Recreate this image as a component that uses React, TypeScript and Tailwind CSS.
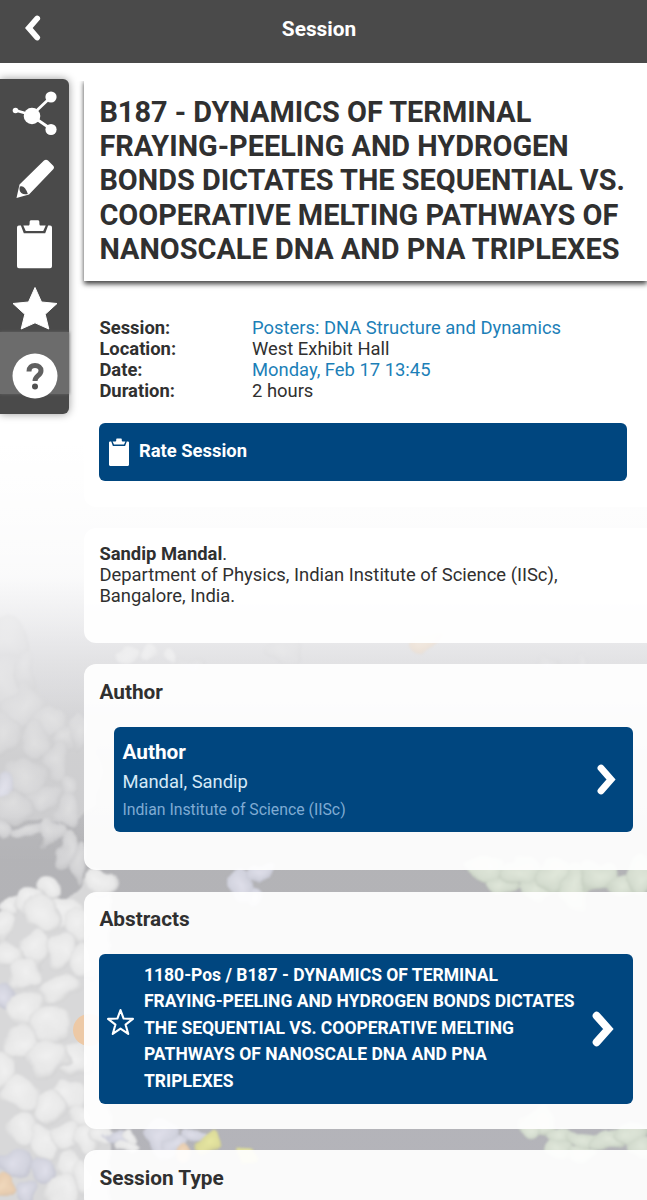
import type { ReactNode } from "react";

// x, y, radius x, radius y, gradient
type Blob = [number, number, number, number, string];

const BLOBS: Blob[] = [
  // left cluster, upper part
  [8, 640, 18, 24, "gray"],
  [2, 680, 26, 26, "gray"],
  [26, 668, 13, 20, "gray"],
  [22, 706, 22, 22, "gray"],
  [4, 735, 18, 24, "gray"],
  [52, 720, 20, 11, "gray"],
  [36, 742, 15, 20, "gray"],
  [66, 736, 13, 14, "gray"],
  [58, 762, 14, 20, "gray"],
  [80, 732, 9, 16, "gray"],
  [26, 778, 22, 17, "gray"],
  [2, 788, 10, 15, "lilac"],
  [70, 786, 12, 15, "gray"],
  [44, 796, 17, 13, "gray"],
  [12, 806, 20, 15, "gray"],
  [68, 812, 10, 18, "gray"],
  [30, 830, 20, 6, "gray"],
  [2, 828, 10, 10, "gray"],
  [52, 832, 9, 15, "gray"],
  [64, 852, 8, 18, "gray"],
  [78, 862, 9, 20, "gray"],
  [103, 882, 17, 14, "white"],
  // left cluster, lower part
  [48, 888, 13, 11, "white"],
  [11, 906, 9, 12, "white"],
  [28, 902, 12, 14, "white"],
  [64, 912, 20, 16, "white"],
  [42, 914, 18, 17, "white"],
  [2, 928, 13, 16, "white"],
  [78, 926, 15, 18, "white"],
  [36, 948, 15, 20, "white"],
  [8, 956, 18, 15, "white"],
  [60, 952, 13, 20, "white"],
  [26, 974, 15, 14, "white"],
  [80, 962, 14, 20, "white"],
  [5, 996, 17, 17, "lilac"],
  [58, 990, 24, 13, "white"],
  [26, 1010, 18, 18, "white"],
  [50, 1022, 20, 18, "white"],
  [22, 1042, 18, 17, "white"],
  [72, 1058, 20, 17, "white"],
  [46, 1056, 20, 20, "white"],
  [2, 1070, 15, 22, "white"],
  [70, 1096, 20, 16, "white"],
  [22, 1094, 19, 18, "white"],
  [50, 1106, 15, 18, "white"],
  [80, 1118, 16, 13, "white"],
  [24, 1130, 19, 19, "white"],
  [46, 1142, 14, 17, "white"],
  [66, 1138, 15, 14, "white"],
  [88, 1140, 15, 12, "white"],
  [104, 1134, 12, 9, "white"],
  [70, 1168, 13, 17, "white"],
  [16, 1163, 19, 13, "lilac"],
  [44, 1172, 12, 15, "lilac"],
  [62, 1192, 14, 17, "white"],
  [2, 1184, 11, 12, "amber"],
  [25, 1192, 13, 13, "lilac"],
  [82, 1178, 9, 18, "white"],
  // strips between the cards
  [127, 654, 11, 10, "white"],
  [149, 655, 10, 9, "white"],
  [171, 656, 9, 8, "white"],
  [190, 664, 13, 8, "gray"],
  [283, 652, 15, 14, "gray"],
  [424, 643, 15, 8, "amber"],
  [547, 663, 14, 8, "gray"],
  [579, 662, 5, 8, "gray"],
  [240, 885, 13, 15, "lilac"],
  [262, 874, 15, 9, "lilac"],
  [254, 896, 10, 8, "lilac"],
  [488, 868, 20, 13, "green"],
  [503, 886, 16, 12, "green"],
  [523, 870, 19, 14, "green"],
  [535, 890, 17, 12, "green"],
  [552, 876, 16, 17, "green"],
  [575, 888, 17, 20, "green"],
  [598, 875, 18, 17, "green"],
  [622, 887, 17, 14, "green"],
  [641, 876, 14, 20, "green"],
  [120, 1136, 12, 9, "lilac"],
  [131, 1134, 8, 9, "white"],
  [126, 1147, 12, 7, "white"],
  [160, 1138, 13, 20, "lilac"],
  [176, 1146, 13, 8, "lilac"],
  [190, 1134, 15, 9, "lilac"],
  [186, 1154, 10, 7, "amber"],
  [208, 1143, 9, 15, "yellow"],
  [245, 1155, 11, 8, "yellow"],
  [540, 1122, 18, 14, "green"],
  [529, 1130, 7, 10, "green"],
  [562, 1134, 16, 9, "green"],
  [560, 1149, 13, 11, "green"],
  [584, 1138, 16, 9, "green"],
  [583, 1154, 15, 9, "green"],
  [608, 1140, 17, 13, "green"],
  [629, 1135, 16, 11, "green"],
  [640, 1151, 17, 11, "green"],
];

const GRADIENTS: Record<string, [string, string, string]> = {
  gray: ["#dcdcdd", "#d2d2d4", "#c5c5c7"],
  white: ["#f0f0f0", "#e8e8e8", "#d0d0d1"],
  lilac: ["#dfdfea", "#d2d3de", "#c3c4d0"],
  green: ["#e0e7da", "#d4dccf", "#c2cbbd"],
  amber: ["#f0d8bc", "#e8cdb0", "#d9c4ae"],
  yellow: ["#e8e8a2", "#dddc9a", "#c9c894"],
};

// Faded protein surface behind the cards
function Backdrop() {
  return (
    <svg
      aria-hidden
      className="pointer-events-none absolute inset-0"
      width="647"
      height="1200"
      viewBox="0 0 647 1200"
    >
      <defs>
        {Object.entries(GRADIENTS).map(([id, [hi, mid, lo]]) => (
          <radialGradient key={id} id={id} cx="48%" cy="45%" r="56%">
            <stop offset="0" stopColor={hi} />
            <stop offset="0.7" stopColor={mid} />
            <stop offset="1" stopColor={lo} />
          </radialGradient>
        ))}
        <linearGradient id="sky" x1="0" y1="0" x2="0" y2="1">
          <stop offset="0.37" stopColor="#ffffff" />
          <stop offset="0.46" stopColor="#eeeef0" />
          <stop offset="0.56" stopColor="#cfcfd2" />
          <stop offset="0.7" stopColor="#b3b3b6" />
          <stop offset="1" stopColor="#b4b4ba" />
        </linearGradient>
        <linearGradient id="haze" x1="0" y1="0" x2="0" y2="1">
          <stop offset="0.48" stopColor="#fff" stopOpacity="0.8" />
          <stop offset="0.55" stopColor="#eeeef0" stopOpacity="0.6" />
          <stop offset="0.63" stopColor="#eee" stopOpacity="0.15" />
          <stop offset="0.72" stopColor="#fff" stopOpacity="0" />
        </linearGradient>
        <filter
          id="surface"
          filterUnits="userSpaceOnUse"
          x="-20"
          y="560"
          width="690"
          height="660"
          colorInterpolationFilters="sRGB"
        >
          <feTurbulence type="fractalNoise" baseFrequency="0.035" numOctaves="2" seed="4" />
          <feDisplacementMap in="SourceGraphic" scale="24" xChannelSelector="R" yChannelSelector="G" />
          <feGaussianBlur stdDeviation="1.300" />
        </filter>
      </defs>
      <rect width="647" height="1200" fill="url(#sky)" />
      <g filter="url(#surface)">
        <path
          d="M-20 620H14L34 670 42 706 70 714 84 730H100V790L76 820 56 820 24 820-20 825Z"
          fill="#cacacc"
        />
        <path d="M-20 920 20 905 40 890 62 898 84 880H110V1215H-20Z" fill="#d8d8d9" />
        {BLOBS.map(([x, y, rx, ry, fill], i) => (
          <ellipse key={i} cx={x} cy={y} rx={rx} ry={ry} fill={`url(#${fill})`} />
        ))}
      </g>
      <circle cx="89" cy="1030" r="16" fill="#edc9a6" />
      <rect width="647" height="1200" fill="url(#haze)" />
    </svg>
  );
}

function ClipboardIcon({ className }: { className: string }) {
  return (
    <svg viewBox="0 0 36 50" fill="currentColor" className={className}>
      <path d="M2 6h2l3 8h22l3-8h2a2 2 0 0 1 2 2v40a2 2 0 0 1-2 2H2a2 2 0 0 1-2-2V8a2 2 0 0 1 2-2Z" />
      <path d="M6.500 6h5c1.500 0 1.500-1 1.500-3.500C13 1 13.600.5 15 .5h6c1.400 0 2 .5 2 2C23 5 23 6 24.500 6h5L27 11.500H9Z" />
    </svg>
  );
}

function Chevron({ className }: { className: string }) {
  return (
    <svg viewBox="0 0 20 34" fill="none" stroke="currentColor" className={className}>
      <path d="m4.500 4.500 11 12.500-11 12.500" strokeWidth="7.500" strokeLinecap="round" />
    </svg>
  );
}

function Toolbar() {
  return (
    <nav className="mt-4 h-[335px] w-[69px] shrink-0 rounded-r-md bg-[#4a4a4a] text-white shadow-[0_0_9px_rgba(0,0,0,0.4)]">
      <div className="flex h-[253px] flex-col items-center">
        <svg viewBox="0 0 46 46" className="mt-3 h-[46px] w-[46px] shrink-0" fill="currentColor">
          <path d="M4 19.500 20 24 39 6M20 25l19 13" stroke="currentColor" strokeWidth="2.800" fill="none" />
          <circle cx="3.500" cy="19.500" r="2.800" />
          <circle cx="20" cy="25" r="8.300" />
          <circle cx="39" cy="6" r="5.600" />
          <circle cx="39" cy="38.500" r="5.600" />
        </svg>
        <svg viewBox="0 0 40 40" className="mt-[22px] h-10 w-10 shrink-0" fill="currentColor">
          <path d="M1.500 39 4.500 25.500 29 1.500q2-1.500 4 0l5 5q2 2 0 4L14 35.500Z" />
          <path d="M4.800 27.500q5-2 8 7.500-4 1-6.500-1-2.500-2.500-1.500-6.500Z" fill="#4a4a4a" />
        </svg>
        <ClipboardIcon className="mt-[20px] h-[50px] w-[35px] shrink-0" />
        <svg viewBox="0 0 46 44" className="mt-[17px] h-[44px] w-[46px] shrink-0" fill="currentColor">
          <path
            d="m23 1.500 6.500 14.500 15.500 1.500L33.200 28.300l3.600 14.700L23 36.800 9.200 43l3.600-14.700L1 17.500 16.500 16Z"
            stroke="currentColor"
            strokeLinejoin="round"
          />
        </svg>
      </div>
      <div className="flex h-[62px] justify-center bg-[#6c6c6c] pt-[21px] shadow-[0_0_3px_#666]">
        <svg viewBox="0 0 46 46" className="h-[46px] w-[46px] shrink-0">
          <circle cx="23" cy="23" r="22.500" fill="#fff" />
          <path
            d="M17 18.500c0-4.200 2.600-6 6-6s6 1.800 6 5.200c0 5-6 5-6 10.300"
            fill="none"
            stroke="#606060"
            strokeWidth="5"
          />
          <circle cx="23" cy="33.500" r="3" fill="#505050" />
        </svg>
      </div>
    </nav>
  );
}

function Card({ className, children }: { className?: string; children: ReactNode }) {
  return <section className={`rounded-l-xl bg-white/[0.93] pl-[15.400px] ${className ?? ""}`}>{children}</section>;
}

const DETAILS = [
  { label: "Session:", value: "Posters: DNA Structure and Dynamics", link: true },
  { label: "Location:", value: "West Exhibit Hall", link: false },
  { label: "Date:", value: "Monday, Feb 17 13:45", link: true },
  { label: "Duration:", value: "2 hours", link: false },
];

export default function App() {
  return (
    <div className="relative h-[1200px] w-[647px] overflow-hidden bg-white font-['Roboto',sans-serif] text-[#303030]">
      <Backdrop />

      <header className="relative grid h-[63px] grid-cols-[69px_1fr_78px] items-start bg-[#4a4a4a] text-white">
        <button type="button" className="pl-[25px] pt-[15px]">
          <Chevron className="h-[26px] w-4 rotate-180" />
        </button>
        <h1 className="pt-4 text-center text-[20.800px] font-bold leading-[27px]">Session</h1>
      </header>

      <div className="relative flex items-start">
        <Toolbar />

        <main className="ml-[15px] w-[563px] shrink-0">
          <section className="relative z-10 mt-4 h-[202px] bg-white pl-[15.400px] pt-4 shadow-[0_3px_5px_rgba(0,0,0,0.75)] [clip-path:inset(2px_0_-12px_-12px)]">
            <h2 className="whitespace-nowrap text-[28.900px] font-bold leading-[34.200px]">
              B187 - DYNAMICS OF TERMINAL
              <br />
              FRAYING-PEELING AND HYDROGEN
              <br />
              BONDS DICTATES THE SEQUENTIAL VS.
              <br />
              COOPERATIVE MELTING PATHWAYS OF
              <br />
              NANOSCALE DNA AND PNA TRIPLEXES
            </h2>
          </section>

          <Card className="h-[226px] rounded-tl-none pt-9">
            <dl className="grid grid-cols-[152.600px_1fr] text-[18.400px] leading-[21px]">
              {DETAILS.map((d) => (
                <div key={d.label} className="contents">
                  <dt className="font-bold">{d.label}</dt>
                  <dd className={d.link ? "text-[#1c7fb8]" : ""}>{d.value}</dd>
                </div>
              ))}
            </dl>
            <button
              type="button"
              className="mt-[22px] flex h-[58px] w-[527.400px] items-center rounded-md bg-[#00467f] pl-[10px] text-white"
            >
              <ClipboardIcon className="h-7 w-5" />
              <span className="ml-[9.500px] pb-0.5 text-[18.400px] font-bold">Rate Session</span>
            </button>
          </Card>

          <Card className="mt-[21px] h-[115px] pt-[15px] text-[18.400px] leading-[21px]">
            <p>
              <b>Sandip Mandal</b>.
            </p>
            <p>Department of Physics, Indian Institute of Science (IISc),</p>
            <p>Bangalore, India.</p>
          </Card>

          <Card className="mt-[21px] h-[206px] pt-4">
            <h3 className="text-[20.800px] font-bold leading-6">Author</h3>
            <div className="ml-[15px] mt-[23px] flex h-[105px] w-[519px] items-center justify-between rounded-md bg-[#00467f] pl-2 pr-[17px]">
              <div>
                <p className="text-[20.800px] font-bold leading-[30px] text-white">Author</p>
                <p className="text-[18.400px] leading-[30px] text-[#d5e9f7]">Mandal, Sandip</p>
                <p className="text-[15.800px] leading-[26px] text-[#7fabd3]">Indian Institute of Science (IISc)</p>
              </div>
              <Chevron className="h-[31px] w-5 text-white" />
            </div>
          </Card>

          <Card className="mt-[22px] h-[237px] pt-4">
            <h3 className="-mt-px text-[20.800px] font-bold leading-6">Abstracts</h3>
            <div className="mt-[23px] flex h-[150px] w-[534px] rounded-md bg-[#00467f] text-white">
              <svg
                viewBox="0 0 26 27"
                className="ml-2 mt-[54px] h-[28px] w-[27px] shrink-0"
                fill="none"
                stroke="currentColor"
                strokeWidth="2"
                strokeLinejoin="round"
              >
                <path d="m13 2 3 8.200 9 .300-7.100 5.500 2.600 9-7.500-5.100L5.500 25l2.600-9L1 10.500l9-.300Z" />
              </svg>
              <p className="ml-[9.600px] mt-2 w-[440px] whitespace-nowrap text-[17.500px] font-bold leading-[26.400px]">
                1180-Pos / B187 - DYNAMICS OF TERMINAL
                <br />
                FRAYING-PEELING AND HYDROGEN BONDS DICTATES
                <br />
                THE SEQUENTIAL VS. COOPERATIVE MELTING
                <br />
                PATHWAYS OF NANOSCALE DNA AND PNA
                <br />
                TRIPLEXES
              </p>
              <Chevron className="ml-[7px] mt-[57px] h-[36px] w-[23px]" />
            </div>
          </Card>

          <Card className="mt-[21px] h-[60px] pt-4">
            <h3 className="text-[20.800px] font-bold leading-6">Session Type</h3>
          </Card>
        </main>
      </div>
    </div>
  );
}
